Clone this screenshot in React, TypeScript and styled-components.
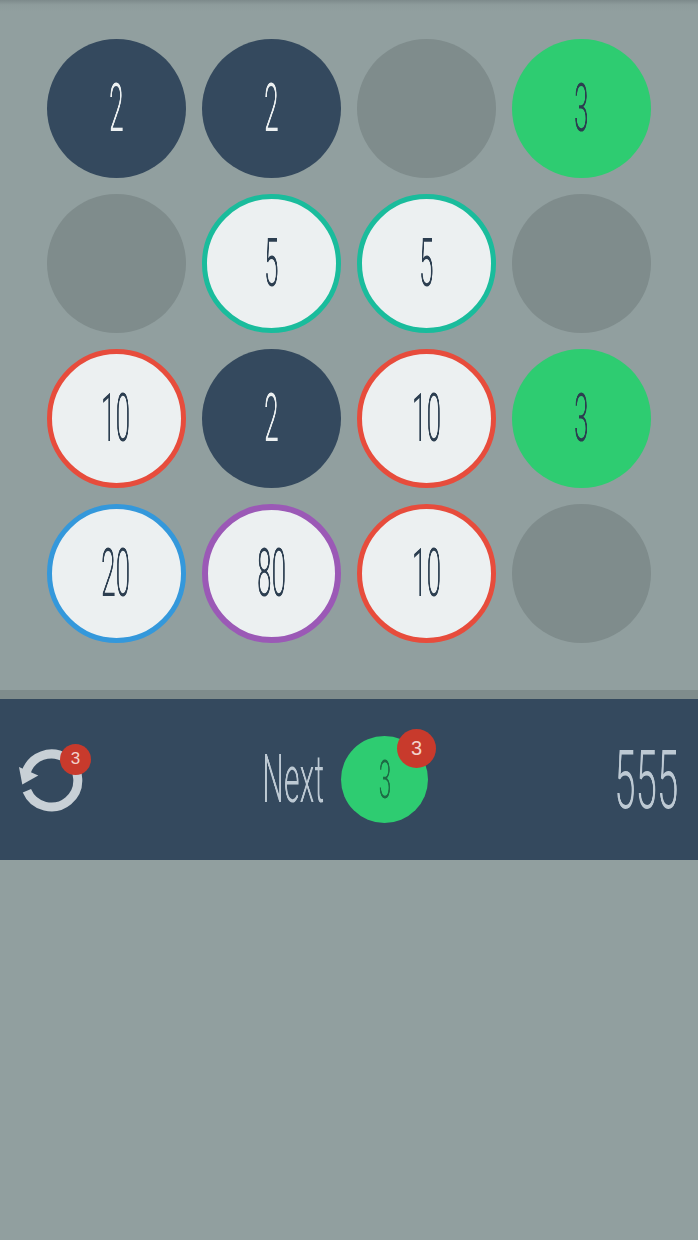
import styled, { createGlobalStyle } from 'styled-components';

type Kind = 'empty' | 'two' | 'three' | 'five' | 'ten' | 'twenty' | 'eighty';

const ringColors: Record<string, string> = {
  five: '#1abc9c',
  ten: '#e74c3c',
  twenty: '#3498db',
  eighty: '#9b59b6',
};

const fillColors: Record<string, string> = {
  empty: '#7f8c8c',
  two: '#34495e',
  three: '#2ecc71',
};

const GlobalStyle = createGlobalStyle`
  html, body {
    margin: 0;
    padding: 0;
    background: #919f9f;
  }
  * {
    box-sizing: border-box;
  }
`;

const Screen = styled.div`
  width: 698px;
  height: 1240px;
  background: #919f9f;
  overflow: hidden;
  display: flex;
  flex-direction: column;
`;

const Board = styled.div`
  height: 690px;
  padding: 39px 0 0 46.6px;
  display: grid;
  grid-template-columns: repeat(4, 139px);
  grid-auto-rows: 139px;
  gap: 16px 16.2px;
  background: linear-gradient(#7d8a8b 0, #8e9c9c 5px, #919f9f 12px);
`;

const Tile = styled.div<{ $kind: Kind }>`
  width: 139px;
  height: 139px;
  border-radius: 50%;
  display: flex;
  align-items: center;
  justify-content: center;
  background: ${p => fillColors[p.$kind] ?? '#ecf0f1'};
  border: ${p => (ringColors[p.$kind] ? `${p.$kind === 'eighty' ? 6.5 : 5.5}px solid ${ringColors[p.$kind]}` : 'none')};
  color: ${p => (p.$kind === 'two' ? '#ecf0f1' : '#2c3e50')};
`;

const Digits = styled.span<{ $size: number; $squeeze: number }>`
  display: inline-block;
  font-family: Roboto, "Liberation Sans", sans-serif;
  font-weight: 300;
  line-height: 1;
  font-size: ${p => p.$size}px;
  transform: scaleX(${p => p.$squeeze});
  will-change: transform;
  white-space: nowrap;
`;

const Divider = styled.div`
  height: 9px;
  background: #7f8c8c;
`;

const Footer = styled.div`
  height: 161px;
  padding: 0 20px 0 19px;
  display: flex;
  align-items: center;
  justify-content: space-between;
  background: #34495e;
  color: #bdc9d3;
`;

const Undo = styled.div`
  position: relative;
  width: 64px;
  height: 64px;
`;

const UndoIcon = styled.svg`
  display: block;
`;

const Badge = styled.span<{ $size: number; $top: number; $right: number; $font: number }>`
  position: absolute;
  top: ${p => p.$top}px;
  right: ${p => p.$right}px;
  width: ${p => p.$size}px;
  height: ${p => p.$size}px;
  border-radius: 50%;
  background: #c83a2c;
  color: #f3d3cc;
  font-family: "Liberation Sans", sans-serif;
  font-size: ${p => p.$font}px;
  display: flex;
  align-items: center;
  justify-content: center;
`;

const NextGroup = styled.div`
  display: flex;
  align-items: center;
  gap: 17px;
  margin-right: 8px;
`;

const NextLabel = styled.div`
  width: 62px;
  display: flex;
  justify-content: center;
`;

const NextTile = styled.div`
  position: relative;
  width: 87px;
  height: 87px;
  border-radius: 50%;
  background: #2ecc71;
  color: #1d6b45;
  display: flex;
  align-items: center;
  justify-content: center;
`;

const Score = styled.div`
  width: 63px;
  display: flex;
  justify-content: center;
`;

const rows: { kind: Kind; value?: string }[][] = [
  [{ kind: 'two', value: '2' }, { kind: 'two', value: '2' }, { kind: 'empty' }, { kind: 'three', value: '3' }],
  [{ kind: 'empty' }, { kind: 'five', value: '5' }, { kind: 'five', value: '5' }, { kind: 'empty' }],
  [{ kind: 'ten', value: '10' }, { kind: 'two', value: '2' }, { kind: 'ten', value: '10' }, { kind: 'three', value: '3' }],
  [{ kind: 'twenty', value: '20' }, { kind: 'eighty', value: '80' }, { kind: 'ten', value: '10' }, { kind: 'empty' }],
];

function App() {
  return (
    <Screen>
      <GlobalStyle />
      <Board>
        {rows.flat().map((tile, i) => (
          <Tile key={i} $kind={tile.kind}>
            {tile.value && <Digits $size={66} $squeeze={0.4}>{tile.value}</Digits>}
          </Tile>
        ))}
      </Board>
      <Divider />
      <Footer>
        <Undo>
          <UndoIcon width="64" height="64" viewBox="0 0 64 64">
            <path d="M7.9 42.8A26.5 26.5 0 1 0 6.9 25" fill="none" stroke="#c8d0d6" strokeWidth="9" />
            <path d="M0 19L3.3 36.5L19.3 27.5Z" fill="#c8d0d6" />
          </UndoIcon>
          <Badge $size={31} $top={-4} $right={-8} $font={17}>3</Badge>
        </Undo>
        <NextGroup>
          <NextLabel>
            <Digits $size={66} $squeeze={0.46}>Next</Digits>
          </NextLabel>
          <NextTile>
            <Digits $size={54} $squeeze={0.42}>3</Digits>
            <Badge $size={39} $top={-7} $right={-8} $font={20}>3</Badge>
          </NextTile>
        </NextGroup>
        <Score>
          <Digits $size={82} $squeeze={0.47}>555</Digits>
        </Score>
      </Footer>
    </Screen>
  );
}

export default App;
